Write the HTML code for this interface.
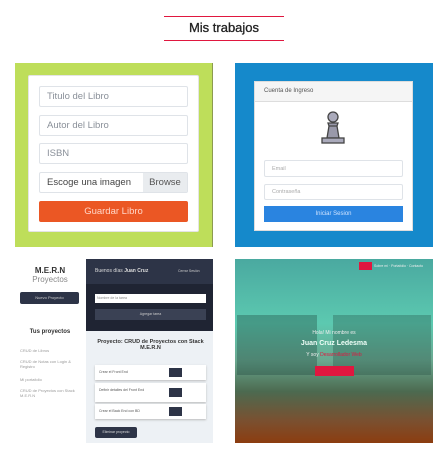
<!DOCTYPE html>
<html><head><meta charset="utf-8"><style>
*{margin:0;padding:0;box-sizing:border-box}
body{width:447px;height:459px;background:#fff;font-family:"Liberation Sans",sans-serif;position:relative;overflow:hidden}
.a{position:absolute}
.inp{position:absolute;background:#fff;border:1px solid #dfe3e8;border-radius:2px;font-size:9.5px;color:#8a9099;padding-left:7px;display:flex;align-items:center}
.s{font-size:4px;color:#999}
</style></head><body>
<div class="a" style="left:164px;top:16px;width:120px;height:1px;background:#e0173f"></div>
<div class="a" style="left:164px;top:40px;width:120px;height:1px;background:#e0173f"></div>
<div class="a" style="left:164px;top:20px;width:120px;text-align:center;font-size:13px;color:#222;-webkit-text-stroke:0.3px #222">Mis trabajos</div>

<div class="a" style="left:15px;top:63px;width:198px;height:184px;background:#bede5a;border-right:1px solid #8c9a50"></div>
<div class="a" style="left:28px;top:75px;width:171px;height:157px;background:#fff;border:1px solid #e4e4e4;border-radius:2px"></div>
<div class="inp" style="left:39px;top:86px;width:149px;height:21px">Titulo del Libro</div>
<div class="inp" style="left:39px;top:115px;width:149px;height:21px">Autor del Libro</div>
<div class="inp" style="left:39px;top:143px;width:149px;height:21px">ISBN</div>
<div class="inp" style="left:39px;top:172px;width:149px;height:21px;color:#444">Escoge una imagen</div>
<div class="a" style="left:143px;top:173px;width:44px;height:19px;background:#e9ecef;font-size:9.5px;color:#555;display:flex;align-items:center;justify-content:center">Browse</div>
<div class="a" style="left:39px;top:201px;width:149px;height:21px;background:#eb5724;border-radius:2px;color:#ffd6c8;font-size:9.5px;display:flex;align-items:center;justify-content:center">Guardar Libro</div>

<div class="a" style="left:235px;top:63px;width:198px;height:184px;background:#1589cb"></div>
<div class="a" style="left:254px;top:81px;width:159px;height:150px;background:#fff;border:1px solid #ddd"></div>
<div class="a" style="left:255px;top:82px;width:157px;height:20px;background:#f5f5f5;border-bottom:1px solid #ddd;font-size:6px;color:#555;padding:6px 9px">Cuenta de Ingreso</div>
<svg class="a" style="left:319px;top:110px" width="28" height="36" viewBox="0 0 28 36"><circle cx="14" cy="7" r="5" fill="#aab" stroke="#444" stroke-width="1.3"/><path d="M9 13h10l-1 3h-8z M10 16h8l2 12H8z" fill="#99a" stroke="#444" stroke-width="1.3"/><rect x="3" y="28" width="22" height="5" fill="#aab" stroke="#444" stroke-width="1.3"/></svg>
<div class="inp" style="left:264px;top:160px;width:139px;height:17px;font-size:5.5px;color:#aaa">Email</div>
<div class="inp" style="left:264px;top:184px;width:139px;height:16px;font-size:5.5px;color:#aaa">Contraseña</div>
<div class="a" style="left:264px;top:206px;width:139px;height:16px;background:#2a84e0;color:#d0e4ff;font-size:6px;display:flex;align-items:center;justify-content:center">Iniciar Sesion</div>

<div class="a" style="left:86px;top:259px;width:127px;height:25px;background:#2d3447"></div>
<div class="a" style="left:86px;top:284px;width:127px;height:47px;background:#1f2433"></div>
<div class="a" style="left:86px;top:331px;width:127px;height:112px;background:#edf1f5"></div>
<div class="a" style="left:20px;top:266px;width:60px;text-align:center;font-size:8px;font-weight:bold;color:#333">M.E.R.N</div>
<div class="a" style="left:20px;top:275px;width:60px;text-align:center;font-size:8px;color:#888">Proyectos</div>
<div class="a" style="left:20px;top:292px;width:59px;height:12px;background:#2d3447;border-radius:2px;font-size:4px;color:#ccc;text-align:center;line-height:12px">Nuevo Proyecto</div>
<div class="a" style="left:20px;top:329px;width:60px;text-align:center;font-size:6px;font-weight:bold;color:#333">Tus proyectos</div>
<div class="a s" style="left:20px;top:348px">CRUD de Libros</div>
<div class="a s" style="left:20px;top:359px;width:60px">CRUD de Notas con Login &amp; Registro</div>
<div class="a s" style="left:20px;top:377px">Mi portafolio</div>
<div class="a s" style="left:20px;top:388px;width:60px">CRUD de Proyectos con Stack M.E.R.N</div>
<div class="a" style="left:95px;top:268px;font-size:5px;color:#ddd">Buenos días <b>Juan Cruz</b></div>
<div class="a" style="left:178px;top:269px;font-size:3.5px;color:#ccc">Cerrar Sesión</div>
<div class="a" style="left:95px;top:294px;width:111px;height:9px;background:#fff;font-size:3.5px;color:#888;padding:2px">Nombre de la tarea</div>
<div class="a" style="left:95px;top:309px;width:111px;height:11px;background:#3a4154;font-size:3.5px;color:#ccc;text-align:center;line-height:11px">Agregar tarea</div>
<div class="a" style="left:95px;top:339px;width:111px;text-align:center;font-size:5.5px;font-weight:bold;color:#333">Proyecto: CRUD de Proyectos con Stack M.E.R.N</div>
<div class="a" style="left:95px;top:365px;width:111px;height:15px;background:#fff;box-shadow:0 1px 2px #bbb;font-size:3.5px;color:#555;padding:5px 4px">Crear el Front End</div>
<div class="a" style="left:95px;top:383px;width:111px;height:19px;background:#fff;box-shadow:0 1px 2px #bbb;font-size:3.5px;color:#555;padding:5px 4px">Definir detalles del Front End</div>
<div class="a" style="left:95px;top:404px;width:111px;height:15px;background:#fff;box-shadow:0 1px 2px #bbb;font-size:3.5px;color:#555;padding:5px 4px">Crear el Back End con BD</div>
<div class="a" style="left:169px;top:368px;width:13px;height:9px;background:#2d3447"></div>
<div class="a" style="left:169px;top:388px;width:13px;height:9px;background:#2d3447"></div>
<div class="a" style="left:169px;top:407px;width:13px;height:9px;background:#2d3447"></div>
<div class="a" style="left:95px;top:427px;width:42px;height:11px;background:#2d3447;border-radius:2px;font-size:3.5px;color:#ddd;text-align:center;line-height:11px">Eliminar proyecto</div>

<div class="a" style="left:235px;top:259px;width:198px;height:184px;background:linear-gradient(180deg,#4aa9a0 0%,#5cc9b0 35%,#6aa890 55%,#4c6a50 72%,#7a5030 88%,#8c3d10 100%)"></div>
<div class="a" style="left:237px;top:315px;width:80px;height:60px;background:rgba(30,70,60,.35)"></div>
<div class="a" style="left:333px;top:315px;width:98px;height:60px;background:rgba(30,70,60,.3)"></div>
<div class="a" style="left:359px;top:262px;width:13px;height:8px;background:#e0173f"></div>
<div class="a" style="left:374px;top:264px;font-size:3.5px;color:#eee">Sobre mi · Portafolio · Contacto</div>
<div class="a" style="left:235px;top:330px;width:198px;text-align:center;font-size:5px;color:#eee">Hola! Mi nombre es</div>
<div class="a" style="left:235px;top:340px;width:198px;text-align:center;font-size:7px;font-weight:bold;color:#f0fff8">Juan Cruz Ledesma</div>
<div class="a" style="left:235px;top:352px;width:198px;text-align:center;font-size:5px;color:#eee">Y soy <span style="color:#e0173f">Desarrollador Web</span></div>
<div class="a" style="left:315px;top:366px;width:39px;height:10px;background:#e0173f"></div>
</body></html>
